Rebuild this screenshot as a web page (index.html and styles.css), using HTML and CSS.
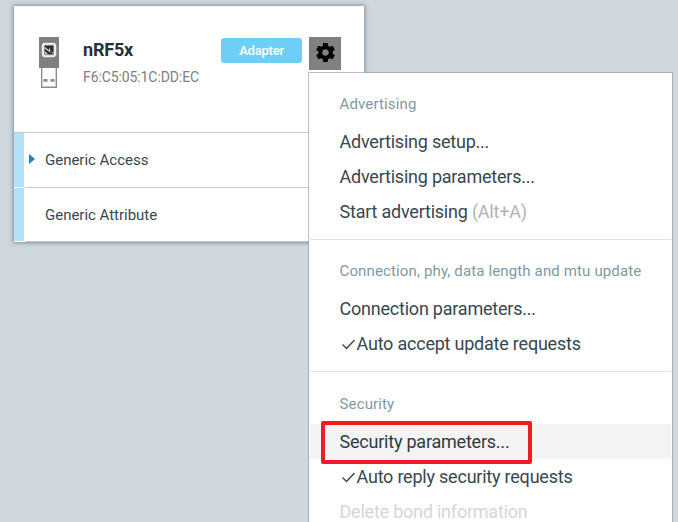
FILE: index.html
```html
<!DOCTYPE html>
<html lang="en">
<head>
<meta charset="utf-8">
<title>nRF5x adapter</title>
<link rel="stylesheet" href="styles.css">
</head>
<body>
<section class="card">
  <header class="card-header">
    <svg class="dongle" width="20" height="51" viewBox="0 0 20 51">
      <rect width="20" height="31" fill="#808080"/>
      <rect x="3.3" y="6.3" width="13.4" height="13.4" rx="2.6" fill="none" stroke="#fff" stroke-width="1.2" stroke-dasharray="1.2 .6"/>
      <rect x="4.1" y="7.1" width="11.8" height="11.8" rx="2" fill="none" stroke="#fff" stroke-width="1.5"/>
      <rect x="5" y="8" width="10" height="10" fill="#909090"/>
      <rect x="5.8" y="8.8" width="8.4" height="8.4" fill="#303030"/>
      <path d="M5.8 9.8l4.2 3.4V11l1.2 1v3.4l-5.4-3.6zM5.8 14l3.4 3.2H5.8zM11.6 14.4l2.6 1.4v1.4z" fill="#ccc"/>
      <path d="M2.7 31v19.3h14.6V31" fill="#fff" stroke="#8c8c8c" stroke-width="1.4"/>
      <path d="M4.5 42h4v2.8h-4zM11.5 42h4v2.8h-4z" fill="#8c8c8c"/>
    </svg>
    <div class="identity">
      <h1 class="name">nRF5x</h1>
      <div class="address">F6:C5:05:1C:DD:EC</div>
    </div>
    <span class="badge">Adapter</span>
    <div class="gear">
      <svg width="19" height="19" viewBox="2 2 20 20"><path d="M19.43 12.98c.04-.32.07-.64.07-.98s-.03-.66-.07-.98l2.11-1.65c.19-.15.24-.42.12-.64l-2-3.46c-.12-.22-.39-.3-.61-.22l-2.49 1c-.52-.4-1.08-.73-1.69-.98l-.38-2.65A.488.488 0 0 0 14 2h-4c-.25 0-.46.18-.49.42l-.38 2.65c-.61.25-1.17.59-1.69.98l-2.49-1c-.23-.09-.49 0-.61.22l-2 3.46c-.13.22-.07.49.12.64l2.11 1.65c-.04.32-.07.65-.07.98s.03.66.07.98l-2.11 1.65c-.19.15-.24.42-.12.64l2 3.46c.12.22.39.3.61.22l2.49-1c.52.4 1.08.73 1.69.98l.38 2.65c.03.24.24.42.49.42h4c.25 0 .46-.18.49-.42l.38-2.65c.61-.25 1.17-.59 1.69-.98l2.49 1c.23.09.49 0 .61-.22l2-3.46c.12-.22.07-.49-.12-.64l-2.11-1.65zM12 15.5c-1.93 0-3.5-1.57-3.5-3.5s1.57-3.5 3.5-3.5 3.5 1.57 3.5 3.5-1.57 3.5-3.5 3.5z"/></svg>
    </div>
  </header>
  <div class="service"><span class="bar"></span><div class="service-body"><span class="arrow"></span>Generic Access</div></div>
  <div class="service"><span class="bar"></span><div class="service-body"><span class="arrow hidden"></span>Generic Attribute</div></div>
</section>

<nav class="menu">
  <div class="group">
    <div class="heading">Advertising</div>
    <div class="item">Advertising setup...</div>
    <div class="item">Advertising parameters...</div>
    <div class="item"><span>Start advertising <span class="hint">(Alt+A)</span></span></div>
  </div>
  <div class="group">
    <div class="heading">Connection, phy, data length and mtu update</div>
    <div class="item">Connection parameters...</div>
    <div class="item"><svg class="check" width="17" height="18" viewBox="0 0 17 18"><path d="M2.5 9.5l4 4 8-8.5"/></svg>Auto accept update requests</div>
  </div>
  <div class="group security">
    <div class="heading">Security</div>
    <div class="item active">Security parameters...<span class="callout"></span></div>
    <div class="item"><svg class="check" width="17" height="18" viewBox="0 0 17 18"><path d="M2.5 9.5l4 4 8-8.5"/></svg>Auto reply security requests</div>
    <div class="item disabled">Delete bond information</div>
  </div>
</nav>
</body>
</html>
```
FILE: styles.css
```css
* { box-sizing: border-box; }
body {
  margin: 0;
  height: 522px;
  padding: 6px 0 0 14px;
  overflow: hidden;
  position: relative;
  background: #cfd8dd;
  font-family: Roboto, "Liberation Sans", sans-serif;
  color: #37474f;
}
svg { display: block; }
.card {
  width: 350px;
  background: #fff;
  box-shadow: 0 0 4px 1px rgba(70, 80, 110, .55);
}
.card-header {
  display: flex;
  align-items: flex-start;
  height: 127px;
  padding: 31px 23px 0 25px;
  border-bottom: 1px solid #c8c8c8;
}
.identity { margin-left: 24px; flex: 1; }
.name {
  margin: 0;
  font-size: 18px;
  line-height: 26px;
  font-weight: 700;
  letter-spacing: -.2px;
  color: #263238;
}
.address {
  margin-top: 5px;
  font-size: 14px;
  line-height: 18px;
  letter-spacing: -.1px;
  color: #808080;
}
.badge {
  width: 81px;
  height: 25px;
  margin: 1px 7px 0 0;
  border-radius: 3px;
  background: #6dcff6;
  color: #fff;
  font-size: 13px;
  font-weight: 500;
  letter-spacing: -.2px;
  line-height: 25px;
  text-align: center;
}
.gear {
  display: grid;
  place-items: center;
  width: 32px;
  height: 33px;
  padding-bottom: 2px;
  background: #808080;
}
.service { display: flex; height: 55px; }
.service:last-child { height: 54px; }
.bar { width: 10px; margin: 0 1px 1px 0; background: #b3e1f6; }
.service-body {
  flex: 1;
  display: flex;
  align-items: center;
  border-bottom: 1px solid #c8c8c8;
  padding-left: 4px;
  font-size: 15px;
  letter-spacing: -.02px;
}
.arrow {
  margin: 0 10px 3px 0;
  border-left: 6px solid #0a8abf;
  border-top: 5px solid transparent;
  border-bottom: 5px solid transparent;
}
.hidden { visibility: hidden; }
.menu {
  position: absolute;
  left: 308px;
  top: 72px;
  width: 365px;
  height: 450px;
  overflow: hidden;
  border: 1px solid rgba(140, 150, 158, .6);
  border-bottom: 0;
  background: #fff;
  background-clip: padding-box;
}
.group { margin: 0 1px; padding: 10px 0; border-bottom: 1px solid #e0e2e4; }
.security { padding-bottom: 0; border-bottom: 0; }
.heading {
  height: 41px;
  padding-left: 29.5px;
  font-size: 15px;
  line-height: 42px;
  letter-spacing: .14px;
  color: #7f98a5;
}
.security .heading { height: 42px; line-height: 44px; }
.item {
  position: relative;
  display: flex;
  align-items: center;
  height: 35px;
  padding-left: 29.5px;
  font-size: 18px;
  letter-spacing: -.22px;
  white-space: nowrap;
}
.security .item:last-child { height: 28px; align-items: flex-start; line-height: 35px; }
.hint { color: #b3b3b3; }
.check { fill: none; stroke: #37474f; stroke-width: 1.4; }
.active { background: #f4f4f4; color: #2e3b42; }
.disabled { color: #cfd8dc; }
.callout {
  position: absolute;
  left: 11px;
  top: -3px;
  width: 211px;
  height: 43px;
  border: 4px solid #ee1c24;
  border-radius: 2px;
  z-index: 1;
}
```
